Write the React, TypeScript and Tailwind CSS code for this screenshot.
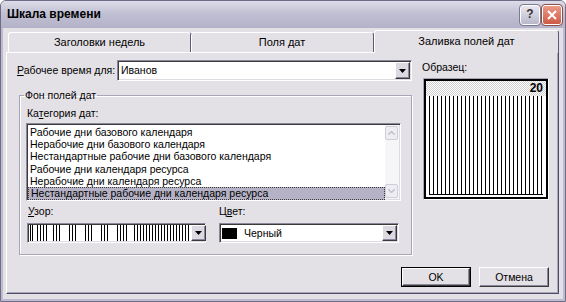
import React from "react";

const rows = [
  "Рабочие дни базового календаря",
  "Нерабочие дни базового календаря",
  "Нестандартные рабочие дни базового календаря",
  "Рабочие дни календаря ресурса",
  "Нерабочие дни календаря ресурса",
  "Нестандартные рабочие дни календаря ресурса",
];

// x positions of the stripes in the pattern sample
const stripes = [1, 3, 8, 11, 14, 17, 24, 27, 30, 40, 43, 46, 56, 59, 62, 72, 75, 78, 88, 91, 94, 97, 105, 108, 111, 114, 117, 120, 123, 126, 129, 132, 135, 138, 141, 144, 147, 150, 153, 156, 159];

const sunken = "border border-t-[#8a889c] border-l-[#8a889c] border-r-white border-b-white p-px shadow-[inset_1px_1px_0_#3a3a3a,inset_-1px_-1px_0_#dedbe2]";

function DropButton() {
  return <div className="flex h-full w-[15px] shrink-0 items-center justify-center border border-t-white border-l-white border-r-[#3a3a3a] border-b-[#3a3a3a] bg-[#dcd9e0] shadow-[inset_-1px_-1px_0_#8a889c]">
    <svg width="7" height="4" viewBox="0 0 7 4"><path d="M0 0h7L3.5 4z" fill="#000" /></svg>
  </div>;
}

function ScrollArrow({ up }: { up?: boolean }) {
  return <div className="flex h-[14px] w-[13px] items-center justify-center rounded-[2px] border border-[#cfcdd9] bg-[#eeedf2]">
    <svg width="7" height="4" viewBox="0 0 7 4"><path d={up ? "M0 4L3.5 0.5L7 4" : "M0 0L3.5 3.5L7 0"} stroke="#c3c1cf" strokeWidth="1.5" fill="none" /></svg>
  </div>;
}

function Button({ children, isDefault }: { children: React.ReactNode; isDefault?: boolean }) {
  return <div className={`h-[20px] w-[70px] ${isDefault ? "border border-black" : ""}`}>
    <div className="flex h-full w-full items-center justify-center border border-t-white border-l-white border-r-[#3a3a3a] border-b-[#3a3a3a] bg-[#e4e1e6] shadow-[inset_-1px_-1px_0_#8a889c]">{children}</div>
  </div>;
}

export default function App() {
  return <div className="flex h-[302px] w-[566px] flex-col overflow-hidden rounded-t-[6px] border border-[#6e6c86] bg-[#e4e1e6] font-['Liberation_Sans',sans-serif] text-[10.5px] leading-[13px] text-black">
    <div className="flex h-[27px] shrink-0 items-center justify-between bg-gradient-to-b from-[#dddce8] via-[#bfbed2] to-[#b3b2c8] pl-[6px] pr-[3px]">
      <span className="text-[12px] font-bold">Шкала времени</span>
      <div className="flex gap-[2px]">
        <div className="flex h-[20px] w-[20px] items-center justify-center rounded-[3px] border border-white bg-gradient-to-b from-[#e8e7ef] to-[#b9b8cb] text-[12px] font-bold text-[#333] outline outline-1 outline-[#7c7a93]">?</div>
        <div className="flex h-[20px] w-[20px] items-center justify-center rounded-[3px] border border-white bg-gradient-to-b from-[#eb9a88] to-[#cc5a45] outline outline-1 outline-[#8a4f48]">
          <svg width="10" height="10" viewBox="0 0 10 10"><path d="M1 1L9 9M9 1L1 9" stroke="#fff" strokeWidth="2" /></svg>
        </div>
      </div>
    </div>
    <div className="flex flex-1 flex-col border-x-2 border-b-2 border-[#bcbbcf] px-[3px] pt-[2px]">
      <div className="flex h-[22px] items-end pl-[2px] text-[11px]">
        <div className="flex h-[20px] w-[182px] items-center justify-center rounded-t-[3px] border-l border-t border-white pb-[1px]">Заголовки недель</div>
        <div className="flex h-[20px] w-[184px] items-center justify-center rounded-t-[3px] border-x border-t border-l-[#5c5a70] border-r-[#5c5a70] border-t-white shadow-[inset_1px_0_0_#fff]">Поля дат</div>
        <div className="relative z-10 -mb-px flex h-[23px] w-[185px] items-center justify-center rounded-t-[3px] border-l border-t border-r border-white border-r-[#5c5a70] bg-[#e4e1e6] pb-[2px]">Заливка полей дат</div>
      </div>
      <div className="flex h-[242px] w-[553px] flex-col border border-l-white border-t-white border-b-[#4e4c62] border-r-[#4e4c62] pl-[10px] pr-[8px] shadow-[inset_-1px_-1px_0_#a9a7ba]">
        <div className="flex gap-[10px]">
          <div className="flex w-[395px] flex-col pt-[7px]">
            <div className="flex items-center">
              <span className="w-[100px] whitespace-nowrap"><u>Р</u>абочее время для:</span>
              <div className={`flex h-[21px] w-[295px] ${sunken}`}>
                <div className="flex flex-1 items-center bg-white pl-[2px]">Иванов</div>
                <DropButton />
              </div>
            </div>
            <fieldset className="ml-[2px] mt-[8px] h-[166px] w-[393px] border border-[#a7a5b8] px-[4px] shadow-[1px_1px_0_#fff,inset_1px_1px_0_#fff]">
              <legend className="px-[1px]">Фон полей дат</legend>
              <div className="pl-[3px]">
                <div className="mt-[5px]">Ка<u>т</u>егория дат:</div>
                <div className={`-ml-[1px] mt-[3px] flex h-[78px] w-[375px] ${sunken}`}>
                  <div className="flex flex-1 flex-col bg-white pt-px">
                    {rows.map((r, i) => <div key={r} className={`flex h-[12.3px] items-center pl-[2px] ${i === rows.length - 1 ? "border border-dotted border-[#3a3a3a] bg-[#b4b2c4] pl-[1px]" : ""}`}>{r}</div>)}
                  </div>
                  <div className="flex w-[14px] flex-col justify-between bg-[#f6f5f8] py-px">
                    <ScrollArrow up />
                    <ScrollArrow />
                  </div>
                </div>
                <div className="mt-[4px] flex">
                  <span className="w-[192px] pl-px"><u>У</u>зор:</span>
                  <span>Ц<u>в</u>ет:</span>
                </div>
                <div className="mt-[5px] flex gap-[13px]">
                  <div className={`flex h-[20px] w-[179px] ${sunken}`}>
                    <div className="flex-1 bg-white">
                      <svg width="162" height="16" viewBox="0 0 162 16">
                        {stripes.map(x => <rect key={x} x={x} y="0" width="1" height="16" fill="#000" />)}
                      </svg>
                    </div>
                    <DropButton />
                  </div>
                  <div className={`flex h-[20px] w-[180px] ${sunken}`}>
                    <div className="flex flex-1 items-center gap-[7px] bg-white pl-[1px]">
                      <div className="h-[11px] w-[15px] bg-black" />
                      <span>Черный</span>
                    </div>
                    <DropButton />
                  </div>
                </div>
              </div>
            </fieldset>
          </div>
          <div className="flex w-[127px] flex-col pt-[8px]">
            <span>Образец:</span>
            <div className="ml-px mt-[4px] flex h-[122px] w-[126px] border border-[#a6a4b6] border-b-white border-r-white">
              <div className="flex flex-1 flex-col border-2 border-black bg-white">
                <div className="flex h-[15px] items-center justify-end bg-[repeating-conic-gradient(#cfcfcf_0_25%,#ffffff_0_50%)] bg-[length:2px_2px] pr-[3px] text-[12px] font-bold">20</div>
                <div className="mx-[3px] mb-[2px] flex-1 border-b border-black bg-[repeating-linear-gradient(90deg,#000_0_1px,#fff_1px_4px)]" />
              </div>
            </div>
          </div>
        </div>
        <div className="mt-[12px] flex justify-end gap-[8px] pr-px">
          <Button isDefault>OK</Button>
          <Button>Отмена</Button>
        </div>
      </div>
    </div>
  </div>;
}
